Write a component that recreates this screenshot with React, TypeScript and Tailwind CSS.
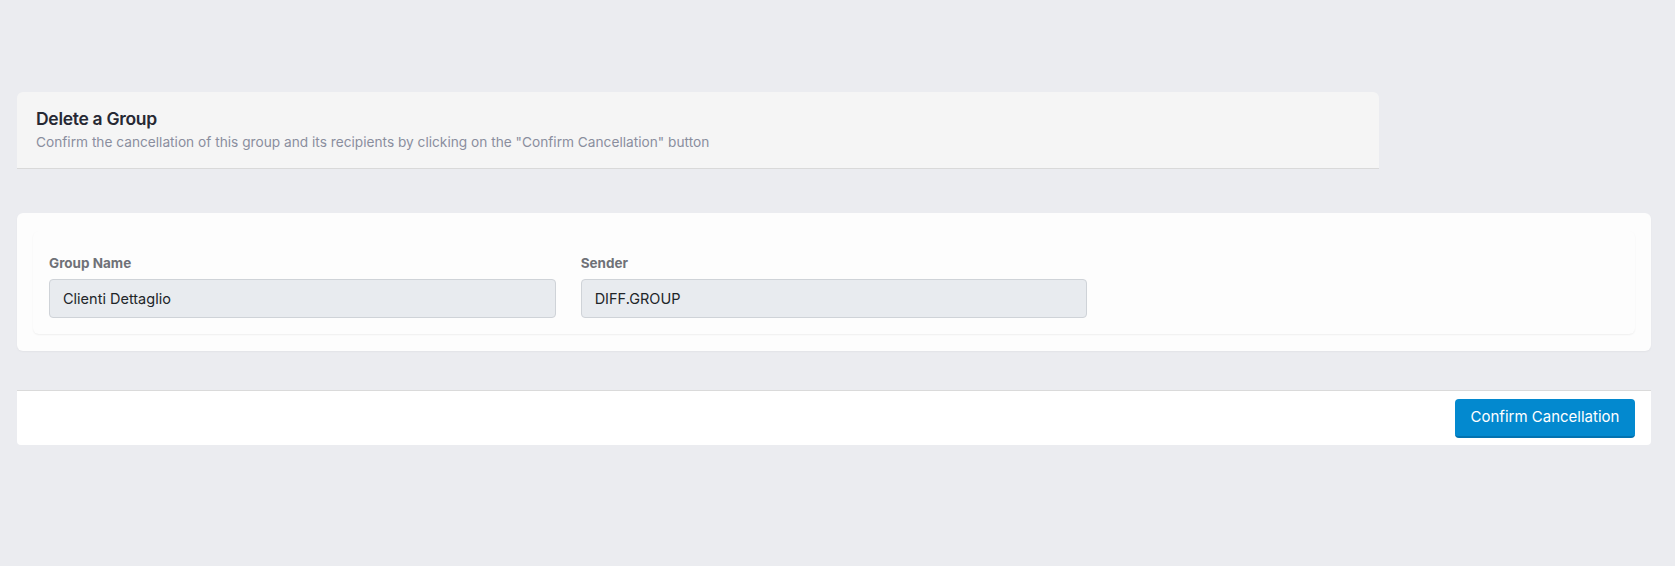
import React from 'react';

const font = { fontFamily: 'Inter, "Open Sans", sans-serif' };

type FieldProps = {
    label: string;
    value: string;
};

const ReadOnlyField: React.FC<FieldProps> = ({ label, value }) => (
    <div className="flex flex-col">
        <label className="mb-[6px] text-[13.5px] font-bold leading-[20px] text-[#6f7177]">{label}</label>
        <input
            readOnly
            value={value}
            className="h-[39px] w-full rounded-[4px] border border-[#cfd3d8] bg-[#e8ebef] px-[13px] text-[14.5px] text-[#212529] outline-none"
        />
    </div>
);

export default function App() {
    return (
        <div className="min-h-[566px] bg-[#ebecf0] pl-[17px] pr-[24px] pt-[92px]" style={font}>
            {/* page header */}
            <div className="w-5/6 rounded-t-[6px] border-b border-[#d9d9d9] bg-[#f5f5f5] px-[19px] pb-[16px] pt-[14px]">
                <h1 className="text-[17.5px] font-semibold leading-[26px] tracking-[-0.3px] text-[#262833]">
                    Delete a Group
                </h1>
                <p className="text-[13.7px] leading-[20px] text-[#8a8e9e]">
                    Confirm the cancellation of this group and its recipients by clicking on the "Confirm Cancellation" button
                </p>
            </div>

            {/* group details */}
            <div className="mt-[44px] rounded-[6px] bg-[#fdfdfd] px-[16px] pb-[17px] pt-[18px] shadow-[0_1px_2px_rgba(0,0,0,0.04)]">
                <div className="rounded-[6px] bg-[#fdfdfd] px-[16px] pb-[16px] pt-[22px] shadow-[0_1px_2px_rgba(0,0,0,0.06)]">
                    <div className="grid grid-cols-3 gap-x-[25px]">
                        <ReadOnlyField label="Group Name" value="Clienti Dettaglio" />
                        <ReadOnlyField label="Sender" value="DIFF.GROUP" />
                    </div>
                </div>
            </div>

            {/* actions */}
            <div className="mt-[39px] flex justify-end rounded-b-[4px] border-t border-[#dadada] bg-white px-[16px] pb-[7px] pt-[8px]">
                <button className="h-[39px] w-[180px] rounded-[4px] border-b-2 border-[#0272b0] bg-[#0389cf] text-[15px] text-white">
                    Confirm Cancellation
                </button>
            </div>
        </div>
    );
}
